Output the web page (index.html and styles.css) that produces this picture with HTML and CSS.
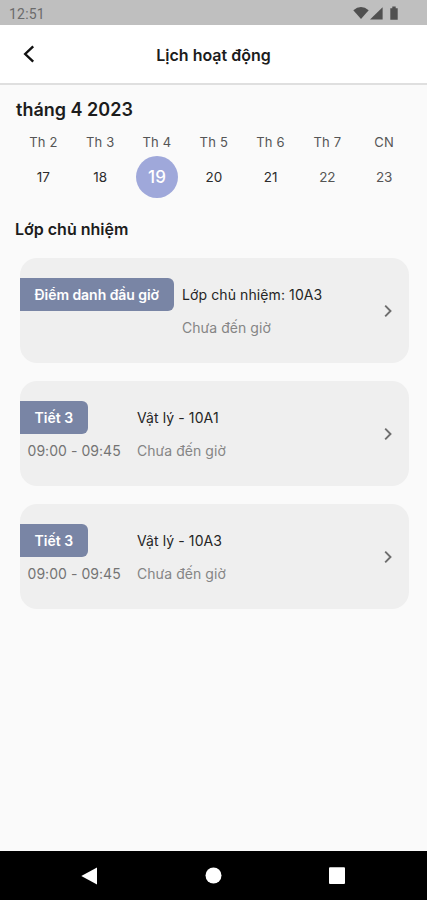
FILE: index.html
```html
<!DOCTYPE html>
<html lang="vi">
<head>
<meta charset="utf-8">
<title>Lịch hoạt động</title>
<link rel="stylesheet" href="styles.css">
</head>
<body>
<div class="screen">
  <div class="status">
    <span class="clock">12:51</span>
    <svg class="status-icons" width="48" height="16" viewBox="0 0 48 16">
      <path d="M0.3 4.2Q8 -2 15.7 4.2L8 13.1Z"/>
      <path d="M29.6 1.2V13.6H17Z"/>
      <path d="M37.3 2.2h2V.5h3.4v1.7h2v11.5h-7.4z"/>
    </svg>
  </div>
  <header class="appbar">
    <svg class="back" width="12" height="18" viewBox="0 0 12 18"><path d="M10.2 1.3L2.2 9L10.2 16.7"/></svg>
    <h1 class="title">Lịch hoạt động</h1>
  </header>
  <main class="content">
    <h2 class="month">tháng 4 2023</h2>
    <div class="week">
      <div class="day"><span class="name">Th 2</span><span class="date">17</span></div>
      <div class="day"><span class="name">Th 3</span><span class="date">18</span></div>
      <div class="day"><span class="name">Th 4</span><span class="date selected">19</span></div>
      <div class="day"><span class="name">Th 5</span><span class="date">20</span></div>
      <div class="day"><span class="name">Th 6</span><span class="date">21</span></div>
      <div class="day"><span class="name">Th 7</span><span class="date weekend">22</span></div>
      <div class="day"><span class="name">CN</span><span class="date weekend">23</span></div>
    </div>
    <h2 class="section">Lớp chủ nhiệm</h2>
    <div class="cards">
      <div class="card">
        <div class="slot wide"><span class="badge homeroom">Điểm danh đầu giờ</span></div>
        <div class="info"><span class="subject">Lớp chủ nhiệm: 10A3</span><span class="state">Chưa đến giờ</span></div>
        <svg class="chevron" width="8" height="14" viewBox="0 0 8 14"><path d="M1.2 1.7L6.5 7L1.2 12.3"/></svg>
      </div>
      <div class="card">
        <div class="slot"><span class="badge">Tiết 3</span><span class="time">09:00 - 09:45</span></div>
        <div class="info"><span class="subject">Vật lý - 10A1</span><span class="state">Chưa đến giờ</span></div>
        <svg class="chevron" width="8" height="14" viewBox="0 0 8 14"><path d="M1.2 1.7L6.5 7L1.2 12.3"/></svg>
      </div>
      <div class="card">
        <div class="slot"><span class="badge">Tiết 3</span><span class="time">09:00 - 09:45</span></div>
        <div class="info"><span class="subject">Vật lý - 10A3</span><span class="state">Chưa đến giờ</span></div>
        <svg class="chevron" width="8" height="14" viewBox="0 0 8 14"><path d="M1.2 1.7L6.5 7L1.2 12.3"/></svg>
      </div>
    </div>
  </main>
  <nav class="navbar">
    <svg width="18" height="18" viewBox="0 0 18 18"><path d="M1.3 9L17 .6V17.4Z"/></svg>
    <svg width="18" height="18" viewBox="0 0 18 18"><circle cx="9.5" cy="8.5" r="8"/></svg>
    <svg width="18" height="18" viewBox="0 0 18 18"><rect x="1" y=".3" width="16" height="16.7" rx="1"/></svg>
  </nav>
</div>
</body>
</html>
```
FILE: styles.css
```css
* { box-sizing: border-box; }
body {
  margin: 0;
  font-family: Inter, sans-serif;
  color: #1c1c1c;
  background: #fafafa;
}
.screen { display: flex; flex-direction: column; width: 427px; height: 900px; overflow: hidden; }
.status {
  flex: none;
  display: flex;
  justify-content: space-between;
  height: 25px;
  padding: 6px 26px 0 9px;
  background: #bfbfbf;
}
.clock { font: 14px/16px Roboto, sans-serif; color: #6b6b6b; letter-spacing: .2px; }
.status-icons { fill: #505050; }
.appbar {
  flex: none;
  display: grid;
  grid-template-columns: 60px 1fr 60px;
  align-items: center;
  height: 60px;
  background: #fff;
  border-bottom: 2px solid #dfdfdf;
}
.back { margin-left: 23px; fill: none; stroke: #111; stroke-width: 2.4; }
.title { margin: 0; padding-top: 1px; font-size: 16px; line-height: 20px; font-weight: 600; text-align: center; white-space: nowrap; }
.content { flex: 1; padding: 14px 15px 0; }
.month { margin: 0; padding-left: 1px; font-size: 18px; line-height: 22px; font-weight: 600; }
.week { display: grid; grid-template-columns: repeat(7, 56.8px); margin-top: 11px; }
.day { display: flex; flex-direction: column; align-items: center; }
.name { font-size: 13px; line-height: 20px; color: #555; letter-spacing: .2px; }
.date {
  display: flex;
  align-items: center;
  justify-content: center;
  width: 42px;
  height: 42px;
  margin-top: 4px;
  font-size: 13.5px;
  color: #2c2c2c;
}
.selected { border-radius: 50%; background: #9fa8da; color: #fff; font-size: 17px; font-weight: 500; }
.weekend { color: #555; }
.section { margin: 20px 0 0; font-size: 16px; line-height: 22px; font-weight: 600; }
.cards { display: flex; flex-direction: column; gap: 18.5px; margin: 18px 3.5px 0 4.5px; }
.card {
  display: flex;
  height: 104.5px;
  padding-top: 20px;
  border-radius: 17px;
  background: #efefef;
}
.slot { display: flex; flex-direction: column; align-items: flex-start; width: 117.5px; }
.wide { width: 162.5px; }
.badge {
  height: 33px;
  padding: 0 15px;
  border-radius: 0 6px 6px 0;
  background: #7985a5;
  color: #fff;
  font-size: 14px;
  line-height: 33px;
  font-weight: 600;
  white-space: nowrap;
}
.homeroom { letter-spacing: -.05px; }
.time { margin: 7px 0 0 8px; font-size: 14px; line-height: 20px; letter-spacing: .05px; color: #747474; white-space: nowrap; }
.info { display: flex; flex: 1; flex-direction: column; padding-top: 7px; }
.subject { font-size: 14px; line-height: 20px; letter-spacing: .1px; color: #252525; }
.state { margin-top: 13px; font-size: 14px; line-height: 20px; letter-spacing: .05px; color: #858585; }
.chevron { margin: 25.5px 16.5px 0 0; fill: none; stroke: #6e6e6e; stroke-width: 1.9; }
.navbar {
  flex: none;
  display: flex;
  justify-content: space-between;
  height: 49px;
  padding: 16px 81px 0 80px;
  background: #000;
}
.navbar svg { fill: #fff; }
```
